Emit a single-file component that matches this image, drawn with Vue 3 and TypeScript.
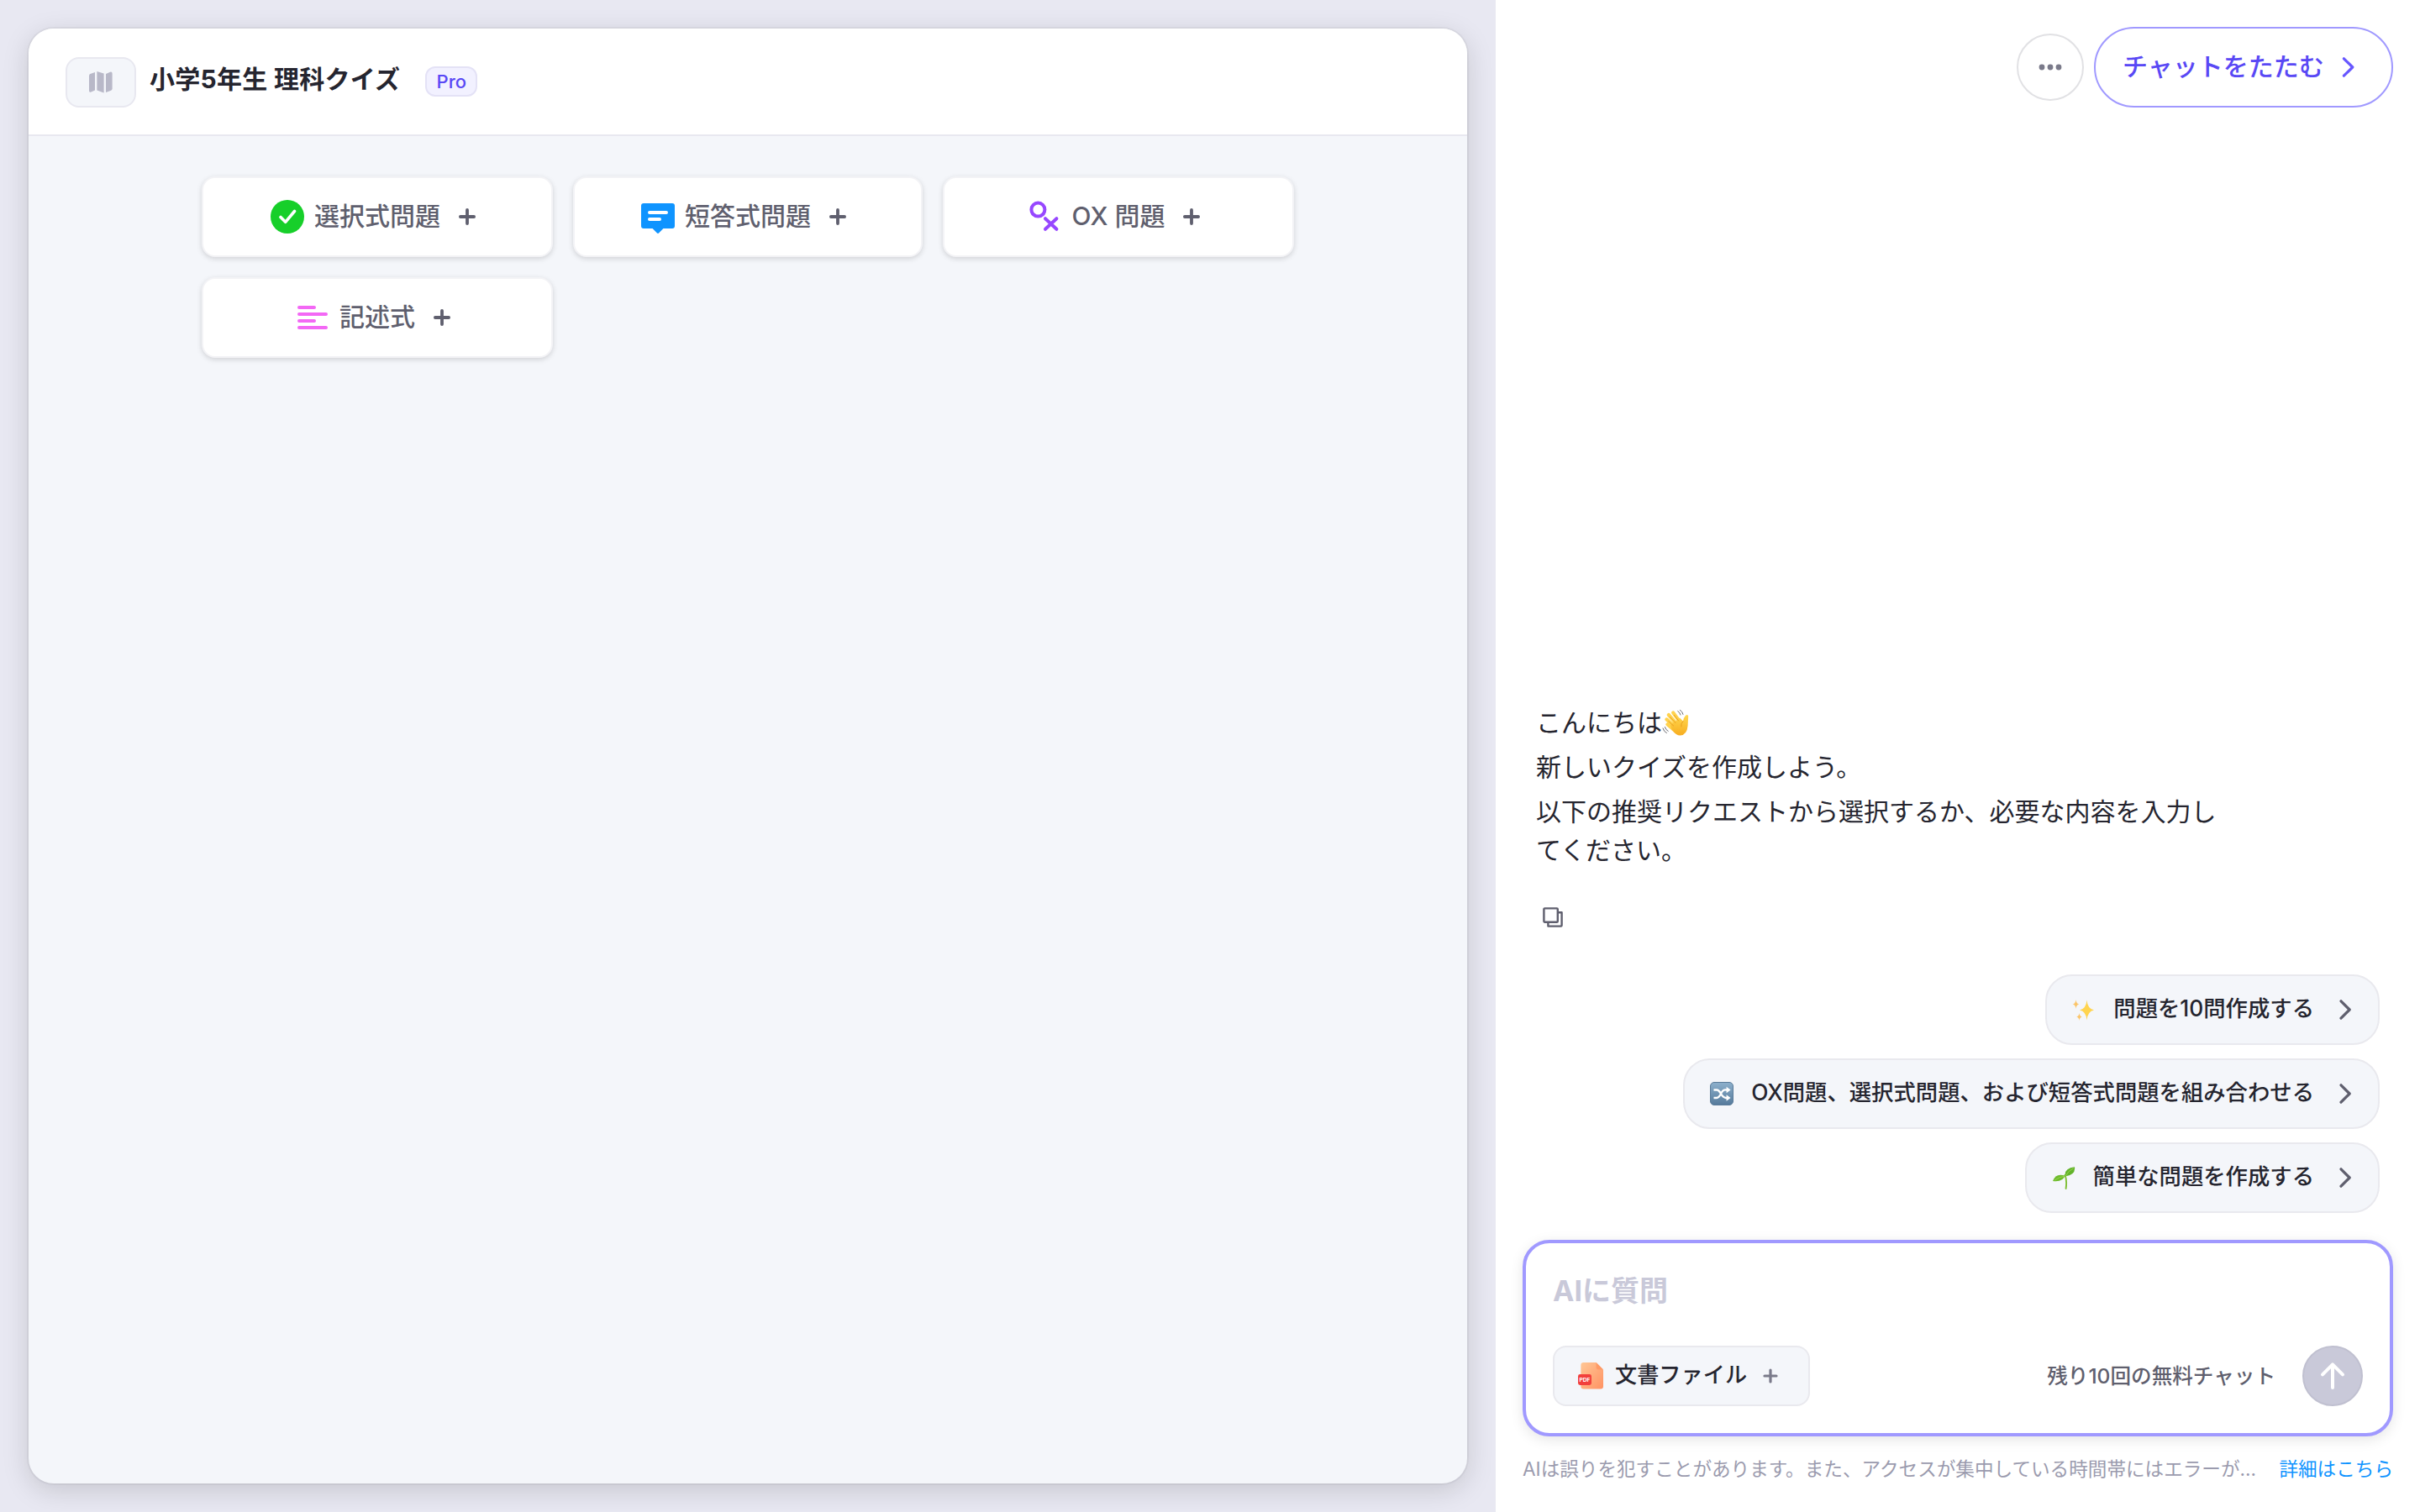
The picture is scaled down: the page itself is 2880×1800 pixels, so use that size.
<script setup lang="ts">
type QuizKind = 'choice' | 'short' | 'ox' | 'essay'
type Mark = 'sparkles' | 'shuffle' | 'seedling'

const quizTypes: { kind: QuizKind; label: string }[] = [
  { kind: 'choice', label: '選択式問題' },
  { kind: 'short', label: '短答式問題' },
  { kind: 'ox', label: 'OX 問題' },
  { kind: 'essay', label: '記述式' },
]

const suggestions: { mark: Mark; label: string }[] = [
  { mark: 'sparkles', label: '問題を10問作成する' },
  { mark: 'shuffle', label: 'OX問題、選択式問題、および短答式問題を組み合わせる' },
  { mark: 'seedling', label: '簡単な問題を作成する' },
]
</script>

<template>
  <div class="app">
    <main class="workspace">
      <section class="sheet">
        <header class="sheet-head">
          <button class="map-btn" aria-label="map">
            <svg width="28" height="26" viewBox="0 0 28 26" fill="#b8b8c8">
              <path d="M0 5.2Q0 3.6 1.4 3L7 1V22.4L2.4 24.6Q0 25.4 0 23Z" />
              <path d="M9.4 0L17.6 2.6V25.4L9.4 22.4Z" />
              <path d="M20 3L25 .8Q27.6 0 27.6 2.6V20.6Q27.6 22.2 26.2 22.8L20 25Z" />
            </svg>
          </button>
          <h1 class="title">小学5年生 理科クイズ</h1>
          <span class="pro">Pro</span>
        </header>
        <div class="sheet-body">
          <div class="types">
            <button v-for="t in quizTypes" :key="t.kind" class="type">
              <svg v-if="t.kind === 'choice'" class="type-icon" viewBox="0 0 48 48">
                <circle cx="24" cy="24" r="20" fill="#17cf2a" />
                <path d="M16 24.5L21.7 30.3L32.5 17.5" fill="none" stroke="#fff" stroke-width="3.6" stroke-linecap="round" stroke-linejoin="round" />
              </svg>
              <svg v-else-if="t.kind === 'short'" class="type-icon" viewBox="0 0 48 48">
                <path d="M7 8H41Q44 8 44 11V35Q44 38 41 38H30.4L25 43.6Q24 44.5 23 43.6L17.6 38H7Q4 38 4 35V11Q4 8 7 8Z" fill="#0f94ff" />
                <path d="M14 19H34M14 27H26" stroke="#fff" stroke-width="4" stroke-linecap="round" />
              </svg>
              <svg v-else-if="t.kind === 'ox'" class="type-icon" viewBox="0 0 48 48" fill="none" stroke="#9747ff" stroke-width="4" stroke-linecap="round">
                <circle cx="15.4" cy="15.6" r="8" />
                <path d="M24 26.2L37.4 38.8M37.4 26.2L24 38.8" />
              </svg>
              <svg v-else class="type-icon" viewBox="0 0 48 48" stroke="#f368f5" stroke-width="4" stroke-linecap="round">
                <path d="M8 12H26M8 20H40M8 28H26M8 36H40" />
              </svg>
              <span class="type-label">{{ t.label }}</span>
              <svg class="plus" width="20" height="20" viewBox="0 0 20 20" stroke="#5f5f6e" stroke-width="3.8" stroke-linecap="round">
                <path d="M10 1.9V18.1M1.9 10H18.1" />
              </svg>
            </button>
          </div>
        </div>
      </section>
    </main>

    <aside class="chat">
      <div class="chat-top">
        <button class="more" aria-label="more">
          <svg width="28" height="8" viewBox="0 0 28 8" fill="#7a7a8a">
            <circle cx="4" cy="4" r="3.4" /><circle cx="14" cy="4" r="3.4" /><circle cx="24" cy="4" r="3.4" />
          </svg>
        </button>
        <button class="fold">
          <span>チャットをたたむ</span>
          <svg width="16" height="26" viewBox="0 0 16 26" fill="none" stroke="#6757ff" stroke-width="3.2" stroke-linecap="round" stroke-linejoin="round">
            <path d="M2.4 2.8L12.8 13L2.4 23.2" />
          </svg>
        </button>
      </div>

      <div class="message">
        <p>
          こんにちは<svg class="wave" viewBox="0 0 34 34">
            <defs>
              <linearGradient id="skin" x1="0" y1="0" x2="0" y2="1">
                <stop offset="0" stop-color="#ffd84f" /><stop offset="1" stop-color="#f7ad20" />
              </linearGradient>
            </defs>
            <g fill="none" stroke="#ffd24d" stroke-width="4.2" stroke-linecap="round">
              <path d="M7.4 19.4L14 25M6.4 13.4L16 22M8.8 8L18 18.6M14.2 5.4L22.4 16.5" />
            </g>
            <path d="M11 20L22 11.5L26 15.6Q26.4 11.6 29 8.8Q31.8 7 32.2 9.6L31.6 21Q30.6 32 22.6 32.6Q18 32.8 12.6 26Z" fill="url(#skin)" />
            <path d="M8.8 15.8L14.6 21M10.6 10.6L17 17.6M15.4 8.4L20.6 15M26 15.6Q23 18 23.8 22" fill="none" stroke="#e79a1b" stroke-width=".9" stroke-linecap="round" />
            <path d="M19.8 3.6Q22.4 5.2 23 8M22.4 2.2Q25.2 4.2 26 7.4M4.4 22.6Q5.2 25.8 8.2 27.4M2 24Q3 28 6.4 29.6" fill="none" stroke="#6a6a6e" stroke-width="1" stroke-linecap="round" />
          </svg>
        </p>
        <p>新しいクイズを作成しよう。</p>
        <p>以下の推奨リクエストから選択するか、必要な内容を入力してください。</p>
      </div>
      <svg class="copy" width="24" height="24" viewBox="0 0 24 24" fill="none" stroke="#5f5f6e" stroke-width="2.4" stroke-linejoin="round">
        <rect x="1.4" y="1.4" width="16.4" height="16.4" rx="1" />
        <path d="M18 6.2H22.6V21.6Q22.6 22.6 21.6 22.6H6.4V18" />
      </svg>

      <div class="suggestions">
        <button v-for="s in suggestions" :key="s.mark" class="chip">
          <svg v-if="s.mark === 'sparkles'" class="mark" viewBox="0 0 28 28" fill="#ffd44f">
            <path d="M17.5 2.5Q18.3 12.9 26 14.5Q18.3 16.1 17.5 26.5Q16.7 16.1 9 14.5Q16.7 12.9 17.5 2.5Z" />
            <path d="M4.5 2Q4.9 6.8 8.4 7.5Q4.9 8.2 4.5 13Q4.1 8.2 .6 7.5Q4.1 6.8 4.5 2Z" fill="#fbc56a" />
            <path d="M8.5 18Q8.9 21.9 11.8 22.5Q8.9 23.1 8.5 27Q8.1 23.1 5.2 22.5Q8.1 21.9 8.5 18Z" fill="#fbc56a" />
          </svg>
          <svg v-else-if="s.mark === 'shuffle'" class="mark" viewBox="0 0 28 28">
            <defs>
              <linearGradient id="tile" x1="0" y1="0" x2="0" y2="1">
                <stop offset="0" stop-color="#8db0cc" /><stop offset="1" stop-color="#557a9b" />
              </linearGradient>
            </defs>
            <rect x=".5" y=".5" width="27" height="27" rx="4.5" fill="url(#tile)" stroke="#5b7c9a" />
            <path d="M4.5 9.5H8Q10.5 9.5 13 14T19 19H21M4.5 19H8Q10.5 19 13 14T19 9.5H21" fill="none" stroke="#fff" stroke-width="2.3" />
            <path d="M19.6 5.8L24.6 9.5L19.6 13.2ZM19.6 15.3L24.6 19L19.6 22.7Z" fill="#fff" />
          </svg>
          <svg v-else class="mark" viewBox="0 0 28 28">
            <path d="M15.6 11Q18 17 16.6 27" fill="none" stroke="#7fbf35" stroke-width="1.9" stroke-linecap="round" />
            <path d="M15.8 12.6Q14 2.6 27 1.2Q28.4 10.6 15.8 12.6Z" fill="#62b32b" />
            <path d="M15.4 11.6Q13.6 19.4 1 18Q4.6 8 15.4 11.6Z" fill="#6dbb2c" />
            <path d="M16.2 12Q19 6 25.8 2.6M15 12.2Q9 12.8 2.8 17.2" fill="none" stroke="#a2d957" stroke-width=".8" />
          </svg>
          <span class="chip-label">{{ s.label }}</span>
          <svg width="16" height="26" viewBox="0 0 16 26" fill="none" stroke="#5f5f6e" stroke-width="3.2" stroke-linecap="round" stroke-linejoin="round">
            <path d="M2 2.8L12.2 13L2 23.2" />
          </svg>
        </button>
      </div>

      <div class="composer">
        <div class="placeholder">AIに質問</div>
        <div class="tools">
          <button class="file">
            <svg class="pdf" width="32" height="34" viewBox="0 0 32 34">
              <defs>
                <linearGradient id="paper" x1="0" y1="0" x2="1" y2="1">
                  <stop offset="0" stop-color="#ffc795" /><stop offset="1" stop-color="#ff9263" />
                </linearGradient>
              </defs>
              <path d="M6.4 1H21.6L30 9.4V29.6Q30 32.6 27 32.6H6.4Q3.4 32.6 3.4 29.6V4Q3.4 1 6.4 1Z" fill="url(#paper)" />
              <path d="M21.6 1L30 9.4H24.6Q21.6 9.4 21.6 6.4Z" fill="#ff9a66" />
              <rect x="0" y="15" width="16" height="13" rx="2.4" fill="#f2403c" />
              <text x="8" y="24" text-anchor="middle" font-size="6.6" font-weight="700" fill="#fff">PDF</text>
            </svg>
            <span>文書ファイル</span>
            <svg width="18" height="18" viewBox="0 0 18 18" stroke="#7a7a8a" stroke-width="3.2" stroke-linecap="round">
              <path d="M9 2V16M2 9H16" />
            </svg>
          </button>
          <span class="remaining">残り10回の無料チャット</span>
          <button class="send" aria-label="send">
            <svg width="30" height="34" viewBox="0 0 30 34" fill="none" stroke="#fff" stroke-width="4" stroke-linecap="round" stroke-linejoin="round">
              <path d="M15 31V3.4M3 15.4L15 3.4L27 15.4" />
            </svg>
          </button>
        </div>
      </div>

      <footer class="notice">
        <span class="notice-text">AIは誤りを犯すことがあります。また、アクセスが集中している時間帯にはエラーが...</span>
        <a class="notice-link">詳細はこちら</a>
      </footer>
    </aside>
  </div>
</template>

<style>
body {
  background: #fff;
}
</style>

<style scoped>
.app {
  display: flex;
  width: 2880px;
  height: 1800px;
  overflow: hidden;
  background: #fff;
  color: #25252f;
  font-family: Inter, "Noto Sans CJK JP", sans-serif;
}
.app * {
  box-sizing: border-box;
}
button {
  font: inherit;
  color: inherit;
  margin: 0;
  padding: 0;
  display: flex;
  align-items: center;
}
svg {
  flex: none;
  display: block;
}

.workspace {
  width: 1780px;
  padding: 34px;
  background: #e8e8f2;
  display: flex;
  overflow: hidden;
}
.sheet {
  flex: 1;
  display: flex;
  flex-direction: column;
  border-radius: 30px;
  background: #f4f6fa;
  box-shadow: 0 0 0 2px rgba(0, 0, 0, 0.04), 0 8px 32px rgba(0, 0, 0, 0.15);
  overflow: hidden;
}
.sheet-head {
  height: 128px;
  padding: 0 44px 6px;
  background: #fff;
  border-bottom: 2px solid #e8e8f0;
  display: flex;
  align-items: center;
}
.map-btn {
  width: 84px;
  height: 60px;
  margin-top: 8px;
  justify-content: center;
  border: 2px solid #e8e8f0;
  border-radius: 16px;
  background: #f4f6fa;
}
.title {
  margin: 0 0 0 16px;
  font-size: 30px;
  font-weight: 700;
  line-height: 44px;
  letter-spacing: 0.27px;
}
.pro {
  width: 62px;
  height: 36px;
  margin: 6px 0 0 30px;
  border: 2px solid #e4e2f6;
  border-radius: 12px;
  background: #f2f1ff;
  color: #5948f5;
  font-size: 22px;
  font-weight: 500;
  line-height: 32px;
  text-align: center;
}
.sheet-body {
  flex: 1;
  padding-top: 48px;
}
.types {
  width: 1300px;
  margin: 0 auto;
  display: grid;
  grid-template-columns: 418px 416px 418px;
  gap: 24px;
}
.type {
  height: 96px;
  justify-content: center;
  border: 2px solid #f3f3f6;
  border-radius: 16px;
  background: #fff;
  box-shadow: 0 2px 6px rgba(0, 0, 0, 0.15);
  color: #5f5f6e;
  font-size: 30px;
  font-weight: 500;
}
.type-icon {
  width: 48px;
  height: 48px;
}
.type-label {
  margin: 0 22px 0 8px;
  padding-bottom: 3px;
  line-height: 44px;
  white-space: nowrap;
}
.plus {
  margin-right: 14px;
}

.chat {
  flex: 1;
  display: flex;
  flex-direction: column;
  padding: 32px 32px 0;
}
.chat-top {
  display: flex;
  justify-content: flex-end;
  align-items: center;
  gap: 12px;
}
.more {
  width: 80px;
  height: 80px;
  justify-content: center;
  border: 2px solid #e1e1e4;
  border-radius: 50%;
  background: #fff;
}
.fold {
  width: 356px;
  height: 96px;
  padding-left: 32px;
  gap: 21px;
  border: 2px solid #a099ff;
  border-radius: 48px;
  background: #fff;
  color: #5948f5;
  font-size: 30px;
  font-weight: 500;
}
.fold span {
  padding-bottom: 7px;
}
.message {
  width: 820px;
  margin: 709px 0 0 16px;
  font-size: 30px;
  line-height: 46px;
}
.message p {
  margin: 0 0 7px;
}
.wave {
  display: inline-block;
  width: 34px;
  height: 34px;
  margin-left: -1px;
  vertical-align: -6px;
}
.copy {
  margin: 38px 0 0 24px;
}
.suggestions {
  margin: 56px 16px 0 0;
  display: flex;
  flex-direction: column;
  align-items: flex-end;
  gap: 16px;
}
.chip {
  height: 84px;
  padding: 0 30px;
  border: 2px solid #e9e9ee;
  border-radius: 32px;
  background: #f4f6fa;
  font-size: 26.35px;
  font-weight: 500;
}
.mark {
  width: 28px;
  height: 28px;
}
.chip-label {
  margin: 0 30px 0 21px;
  padding-bottom: 4px;
  line-height: 40px;
  white-space: nowrap;
}
.composer {
  height: 234px;
  margin-top: 32px;
  padding: 32px;
  border: 4px solid #a099ff;
  border-radius: 32px;
  background: #fff;
  box-shadow: 0 4px 16px rgba(0, 0, 0, 0.1);
  display: flex;
  flex-direction: column;
  justify-content: space-between;
}
.placeholder {
  color: #c9c9d9;
  font-size: 34px;
  font-weight: 700;
  line-height: 50px;
}
.tools {
  display: flex;
  align-items: center;
}
.file {
  width: 306px;
  height: 72px;
  padding-left: 28px;
  border: 2px solid #e9e9ee;
  border-radius: 16px;
  background: #f4f6fa;
  font-size: 26.2px;
  font-weight: 500;
}
.file span {
  margin: 0 19px 0 12px;
  padding-bottom: 6px;
}
.remaining {
  margin-left: auto;
  padding-bottom: 5px;
  color: #5f5f6e;
  font-size: 24.6px;
  font-weight: 500;
}
.send {
  width: 72px;
  height: 72px;
  margin-left: 32px;
  justify-content: center;
  border: 2px solid #c0c0d0;
  border-radius: 50%;
  background: #c9c9d9;
}
.notice {
  margin-top: 21px;
  display: flex;
  justify-content: space-between;
  font-size: 22.6px;
  line-height: 36px;
  white-space: nowrap;
  color: #9b9bae;
}
.notice-link {
  color: #0f94ff;
}
</style>
